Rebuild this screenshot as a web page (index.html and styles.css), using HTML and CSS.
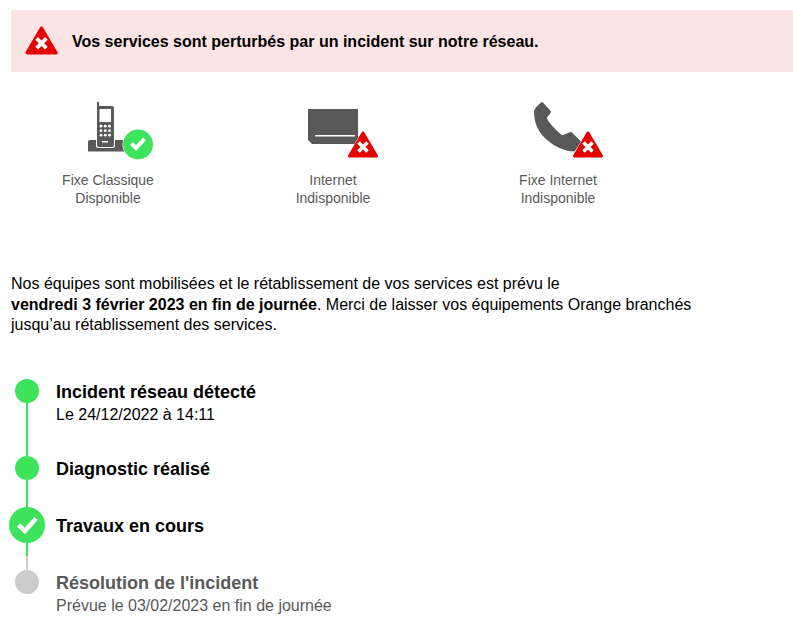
FILE: index.html
```html
<!DOCTYPE html>
<html lang="fr">
<head>
    <meta charset="UTF-8">
    <title>Suivi d'incident</title>
    <link rel="stylesheet" href="styles.css">
</head>
<body>
    <svg class="defs" width="0" height="0">
        <symbol id="badge-ko" viewBox="0 0 30 27">
            <path d="M15 2 L28.5 25 L1.5 25 Z" fill="#e60000" stroke="#e60000" stroke-width="3" stroke-linejoin="round"/>
            <path d="M10.5 11.5 L19.5 20.5 M19.5 11.5 L10.5 20.5" stroke="#fff" stroke-width="3.6" fill="none"/>
        </symbol>
    </svg>

    <!-- bandeau incident -->
    <div class="banner">
        <svg class="banner-icon" width="33" height="29"><use href="#badge-ko" width="33" height="29"/></svg>
        <strong>Vos services sont perturbés par un incident sur notre réseau.</strong>
    </div>

    <!-- etat des services -->
    <div class="services">
        <div class="service">
            <svg width="100" height="62" viewBox="0 0 100 62">
                <path d="M32 40 H68 V51.5 H30 V42 Q30 40 32 40 Z" fill="#595959"/>
                <rect x="38" y="38" width="19" height="10" rx="2.500" fill="#fff"/>
                <path d="M39 2 H41 V6 H54 Q56 6 56 8 V45 Q56 47 54 47 H41 Q39 47 39 45 Z" fill="#595959"/>
                <rect x="41.5" y="9" width="11.5" height="13" fill="#fff"/>
                <g fill="#fff">
                    <circle cx="43" cy="26.200" r="1.400"/><circle cx="47.300" cy="26.200" r="1.400"/><circle cx="51.500" cy="26.200" r="1.400"/>
                    <circle cx="43" cy="30.700" r="1.400"/><circle cx="47.300" cy="30.700" r="1.400"/><circle cx="51.500" cy="30.700" r="1.400"/>
                    <circle cx="43" cy="35.200" r="1.400"/><circle cx="47.300" cy="35.200" r="1.400"/><circle cx="51.500" cy="35.200" r="1.400"/>
                    <rect x="44" y="41" width="6" height="1.500"/>
                </g>
                <circle cx="80" cy="44.500" r="15.500" fill="#fff"/>
                <circle cx="80" cy="44.500" r="15" fill="#3de35a"/>
                <path d="M73.500 43.500 L78 48 L86.500 38.800" fill="none" stroke="#fff" stroke-width="4"/>
            </svg>
            <p>Fixe Classique<br>Disponible</p>
        </div>
        <div class="service">
            <svg width="100" height="62" viewBox="0 0 100 62">
                <path d="M25 9 H75 V44 H29 L25 40 Z" fill="#595959"/>
                <rect x="32" y="35" width="40" height="1.500" fill="#fff"/>
                <path d="M80 29 L97 59 H63 Z" fill="#fff"/>
                <use href="#badge-ko" x="65" y="31" width="30" height="27"/>
            </svg>
            <p>Internet<br>Indisponible</p>
        </div>
        <div class="service">
            <svg width="100" height="62" viewBox="0 0 100 62">
                <path d="M27 11 Q28 8 34 3 L42 12 L37.500 18 Q42 27 54 36.500 L63 33 L72 42 L66 50.500 Q52 50 40 39.500 Q27 29 27 11 Z" fill="#595959" stroke="#595959" stroke-width="2" stroke-linejoin="round"/>
                <path d="M80 29 L97 59 H63 Z" fill="#fff"/>
                <use href="#badge-ko" x="65" y="31" width="30" height="27"/>
            </svg>
            <p>Fixe Internet<br>Indisponible</p>
        </div>
    </div>

    <p class="message">
        Nos équipes sont mobilisées et le rétablissement de vos services est prévu le<br>
        <strong>vendredi 3 février 2023 en fin de journée</strong>. Merci de laisser vos équipements Orange branchés<br>
        jusqu’au rétablissement des services.
    </p>

    <!-- suivi -->
    <div class="steps">
        <div class="step">
            <div class="track"><span class="dot"></span><span class="line"></span></div>
            <div class="step-text">
                <h3>Incident réseau détecté</h3>
                <p>Le 24/12/2022 à 14:11</p>
            </div>
        </div>
        <div class="step">
            <div class="track"><span class="dot"></span><span class="line"></span></div>
            <div class="step-text">
                <h3>Diagnostic réalisé</h3>
            </div>
        </div>
        <div class="step current">
            <div class="track">
                <span class="dot">
                    <svg width="36" height="36" viewBox="0 0 36 36"><path d="M9.500 18 L16 24 L27 11.500" fill="none" stroke="#fff" stroke-width="4.500"/></svg>
                </span>
                <span class="line"></span>
                <span class="line todo"></span>
            </div>
            <div class="step-text">
                <h3>Travaux en cours</h3>
            </div>
        </div>
        <div class="step future">
            <div class="track"><span class="dot"></span></div>
            <div class="step-text">
                <h3>Résolution de l'incident</h3>
                <p>Prévue le 03/02/2023 en fin de journée</p>
            </div>
        </div>
    </div>
</body>
</html>
```

FILE: styles.css
```css
body {
    margin: 0;
    padding: 10px 0 0 11px;
    font-family: "Liberation Sans", Arial, sans-serif;
    color: #000;
    background: #fff;
}
.defs {
    display: block;
    height: 0;
}
.banner {
    display: flex;
    align-items: center;
    gap: 14px;
    height: 62px;
    padding-left: 14px;
    background: #fce4e4;
    font-size: 16px;
}
.banner strong {
    margin-top: 2px;
}
.banner-icon {
    flex: none;
    margin-bottom: 1px;
}
.services {
    display: grid;
    grid-template-columns: 194px 194px 194px;
    column-gap: 31px;
    margin-top: 28px;
}
.service {
    text-align: center;
}
.service svg {
    display: block;
    margin: 0 auto;
}
.service p {
    margin: 9px 0 0;
    font-size: 14px;
    line-height: 18px;
    color: #595959;
}
.message {
    margin: 67px 0 0;
    font-size: 16px;
    line-height: 20.500px;
}
.steps {
    margin: 43px 0 0 -2px;
}
.step {
    display: flex;
    gap: 11px;
}
.track {
    display: flex;
    flex-direction: column;
    align-items: center;
    flex: none;
    width: 36px;
}
.dot {
    flex: none;
    width: 24px;
    height: 24px;
    border-radius: 50%;
    background: #3de35a;
}
.line {
    flex: 1;
    width: 2px;
    background: #3de35a;
}
.line.todo {
    background: #ccc;
}
.step-text {
    padding-top: 1px;
    padding-bottom: 26px;
}
.step-text h3 {
    margin: 0;
    font-size: 18px;
    line-height: 24px;
}
.step-text p {
    margin: 0 0 5px;
    font-size: 16px;
    line-height: 21px;
}
.current .dot {
    width: 36px;
    height: 36px;
}
.current .dot svg {
    display: block;
}
.current .step-text {
    padding-top: 7px;
    padding-bottom: 32px;
}
.future .dot {
    background: #ccc;
}
.future .step-text h3,
.future .step-text p {
    color: #595959;
}
.future .step-text {
    padding-bottom: 0;
}
```
